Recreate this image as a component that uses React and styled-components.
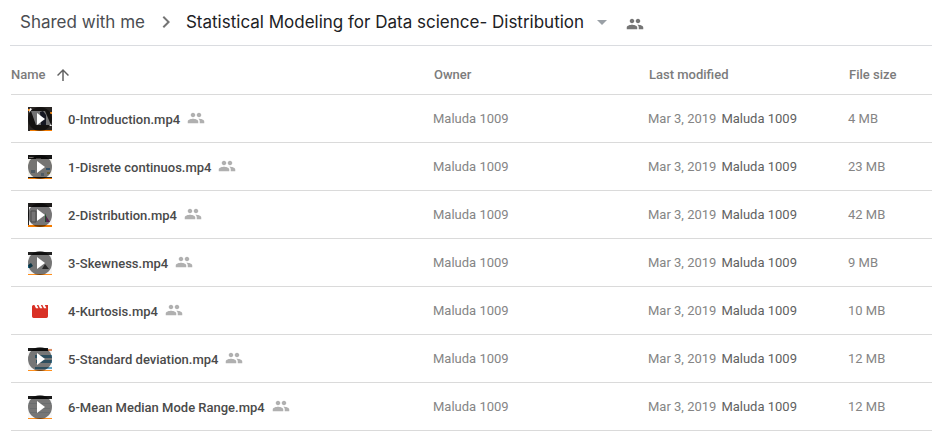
import * as React from 'react';
import styled, { createGlobalStyle } from 'styled-components';
import {
  MdArrowDropDown,
  MdArrowUpward,
  MdChevronRight,
  MdPeople,
} from 'react-icons/md';

const OWNER = 'Maluda 1009';

const files = [
  { name: '0-Introduction.mp4', size: '4 MB', thumb: 'intro' },
  { name: '1-Disrete continuos.mp4', size: '23 MB', thumb: 'continuous' },
  { name: '2-Distribution.mp4', size: '42 MB', thumb: 'distribution' },
  { name: '3-Skewness.mp4', size: '9 MB', thumb: 'skewness' },
  { name: '4-Kurtosis.mp4', size: '10 MB' },
  { name: '5-Standard deviation.mp4', size: '12 MB', thumb: 'deviation' },
  { name: '6-Mean Median Mode Range.mp4', size: '12 MB', thumb: 'range' },
];

// first frame of each video, drawn below the play disc
const frames = {
  intro: (
    <>
      <rect width="24" height="24" fill="#2b2725" />
      <path d="M3 4h14l6 14H8z" fill="#f0f0f2" />
      <path d="M12 5l3-1 3 4v10h-5z" fill="#2c3048" />
      <path d="M0 2h2v2H0zM22 5h2v2h-2z" fill="#f08a1c" />
      <path d="M2 1l2 1-3 4zM22 16l2 3h-3z" fill="#fff" />
      <rect x="2" y="23" width="22" height="1" fill="#f57c00" />
    </>
  ),
  continuous: (
    <>
      <rect width="24" height="24" fill="#f4f3ee" />
      <rect width="24" height="4" fill="#151515" />
      <path d="M1 2h5v1H1zM8 3h5v1H8z" fill="#77706c" />
      <path d="M3 15h4v3H3zM13 18h3v3h-3z" fill="#a5bccd" />
      <path d="M18 13h4v2h-4z" fill="#6aa7d8" />
      <path d="M19 17h3v2h-3z" fill="#e0c56a" />
      <rect y="22" width="24" height="1" fill="#222" />
      <rect y="23" width="24" height="1" fill="#f57c00" />
    </>
  ),
  distribution: (
    <>
      <rect width="24" height="24" fill="#f6f4f6" />
      <rect width="24" height="4" fill="#1d1b1a" />
      <rect width="1" height="22" fill="#222" />
      <path d="M3 8h5v11H3z" fill="none" stroke="#999" />
      <path d="M17 10l3 9h-3z" fill="#3fa65b" />
      <path d="M18 13l4 6h-4z" fill="#b04f9d" />
      <rect y="22" width="24" height="2" fill="#f57c00" />
    </>
  ),
  skewness: (
    <>
      <rect y="1" width="24" height="22" fill="#f5f5f5" />
      <rect y="1" width="24" height="3" fill="#222" />
      <path d="M0 14l3-2 2 3-3 2H0z" fill="#1c6f8f" />
      <path d="M14 18l3-5 4 5z" fill="#555" />
      <rect y="23" width="24" height="1" fill="#ff8f1c" />
    </>
  ),
  deviation: (
    <>
      <rect y="1" width="24" height="22" fill="#f7f7f7" />
      <rect y="1" width="20" height="3" fill="#1b1b1b" />
      <path d="M20 2h4v2h-4z" fill="#d98b62" />
      <path d="M7 8h17v3H7zM8 13h16v3H8zM7 20h17v2H7z" fill="#5fa3c4" />
      <rect y="23" width="24" height="1" fill="#ff8f1c" />
    </>
  ),
  range: (
    <>
      <rect y="1" width="24" height="22" fill="#f7f7f7" />
      <rect y="1" width="24" height="3" fill="#1b1b1b" />
      <path d="M0 8h24v1H0zM2 13h20v1H2zM2 17h20v1H2z" fill="#dde3e6" />
      <rect y="23" width="24" height="1" fill="#ff8f1c" />
    </>
  ),
};

function Thumbnail({ frame }) {
  return (
    <Picture viewBox="0 0 24 24" aria-hidden="true">
      {frames[frame]}
      <circle cx="12" cy="12" r="12" fill="#000" fillOpacity="0.52" />
      <path d="M9 6l8 6-8 6z" fill="#fff" />
    </Picture>
  );
}

function VideoIcon() {
  return (
    <Clapper viewBox="2 4 20 16" aria-hidden="true">
      <path d="M18 4l2 4h-3l-2-4h-2l2 4h-3l-2-4H8l2 4H7L5 4H4c-1.1 0-2 .9-2 2v12c0 1.1.9 2 2 2h16c1.1 0 2-.9 2-2V4z" />
    </Clapper>
  );
}

function App() {
  return (
    <Page>
      <GlobalStyle />
      <Breadcrumbs aria-label="Folder path">
        <ParentLink href="#shared">Shared with me</ParentLink>
        <Separator size={24} />
        <FolderButton type="button">
          Statistical Modeling for Data science- Distribution
          <MdArrowDropDown size={24} />
        </FolderButton>
        <ShareButton type="button" aria-label="Manage people">
          <MdPeople size={18} />
        </ShareButton>
      </Breadcrumbs>

      <FileTable>
        <thead>
          <tr>
            <HeadCell>
              <SortButton type="button">
                Name
                <MdArrowUpward size={18} />
              </SortButton>
            </HeadCell>
            <HeadCell $width="215px">Owner</HeadCell>
            <HeadCell $width="200px">Last modified</HeadCell>
            <HeadCell $width="84px">File size</HeadCell>
          </tr>
        </thead>
        <tbody>
          {files.map((file) => (
            <tr key={file.name}>
              <Cell>
                <FileName>
                  <IconBox>
                    {file.thumb ? (
                      <Thumbnail frame={file.thumb} />
                    ) : (
                      <VideoIcon />
                    )}
                  </IconBox>
                  <Label>{file.name}</Label>
                  <SharedIcon size={18} />
                </FileName>
              </Cell>
              <Cell>{OWNER}</Cell>
              <Cell>
                Mar 3, 2019
                <Editor>{OWNER}</Editor>
              </Cell>
              <Cell>{file.size}</Cell>
            </tr>
          ))}
        </tbody>
      </FileTable>
    </Page>
  );
}

const GlobalStyle = createGlobalStyle`
  * {
    box-sizing: border-box;
  }
  body {
    margin: 0;
    background: #fff;
    font-family: Roboto, Arial, sans-serif;
  }
  button {
    padding: 0;
    border: none;
    background: none;
    font: inherit;
    color: inherit;
    cursor: pointer;
  }
`;
const Page = styled.main`
  padding-left: 10px;
`;
const Breadcrumbs = styled.nav`
  display: flex;
  align-items: center;
  height: 46px;
  padding: 0 0 2px 10px;
  border-bottom: 1px solid #dadce0;
  font-family: 'Google Sans', Inter, sans-serif;
  font-size: 17px;
  line-height: 24px;
  white-space: nowrap;
`;
const ParentLink = styled.a`
  color: #4a4d51;
  text-decoration: none;
`;
const Separator = styled(MdChevronRight)`
  margin: 0 8px 0 9px;
  color: #757575;
`;
const FolderButton = styled.button`
  display: flex;
  align-items: center;
  gap: 6px;
  color: #202124;
  svg {
    color: #9aa0a6;
  }
`;
const ShareButton = styled.button`
  display: flex;
  margin-left: 12px;
  padding-top: 4px;
  color: #757575;
`;
const FileTable = styled.table`
  width: calc(100% - 1px);
  margin-left: 1px;
  border-collapse: separate;
  border-spacing: 0;
  table-layout: fixed;
  font-size: 13px;
  line-height: 16px;
  white-space: nowrap;
`;
const HeadCell = styled.th`
  width: ${(props) => props.$width || 'auto'};
  height: 49px;
  padding: 10px 0 0 ${(props) => (props.$width ? '1px' : '0')};
  border-bottom: 1px solid #dadada;
  text-align: left;
  font-weight: 500;
  color: #7c7c7c;
`;
const SortButton = styled.button`
  display: flex;
  align-items: center;
  gap: 8px;
  svg {
    color: #616161;
  }
`;
const Cell = styled.td`
  height: 48px;
  padding: 1px 0 0;
  border-bottom: 1px solid #dadada;
  color: #858585;
`;
const FileName = styled.div`
  display: flex;
  align-items: center;
  padding-left: 17px;
`;
const IconBox = styled.span`
  display: flex;
  justify-content: center;
  width: 24px;
  margin-right: 16px;
`;
const Picture = styled.svg`
  width: 24px;
  height: 24px;
`;
const Clapper = styled.svg`
  width: 16px;
  height: 13px;
  fill: #d93025;
`;
const Label = styled.span`
  padding-top: 2px;
  font-weight: 500;
  color: #4a4a4a;
`;
const SharedIcon = styled(MdPeople)`
  margin: 0 0 2px 7px;
  color: #b0b0b0;
`;
const Editor = styled.span`
  margin-left: 5px;
  color: #616161;
`;

export default App;
